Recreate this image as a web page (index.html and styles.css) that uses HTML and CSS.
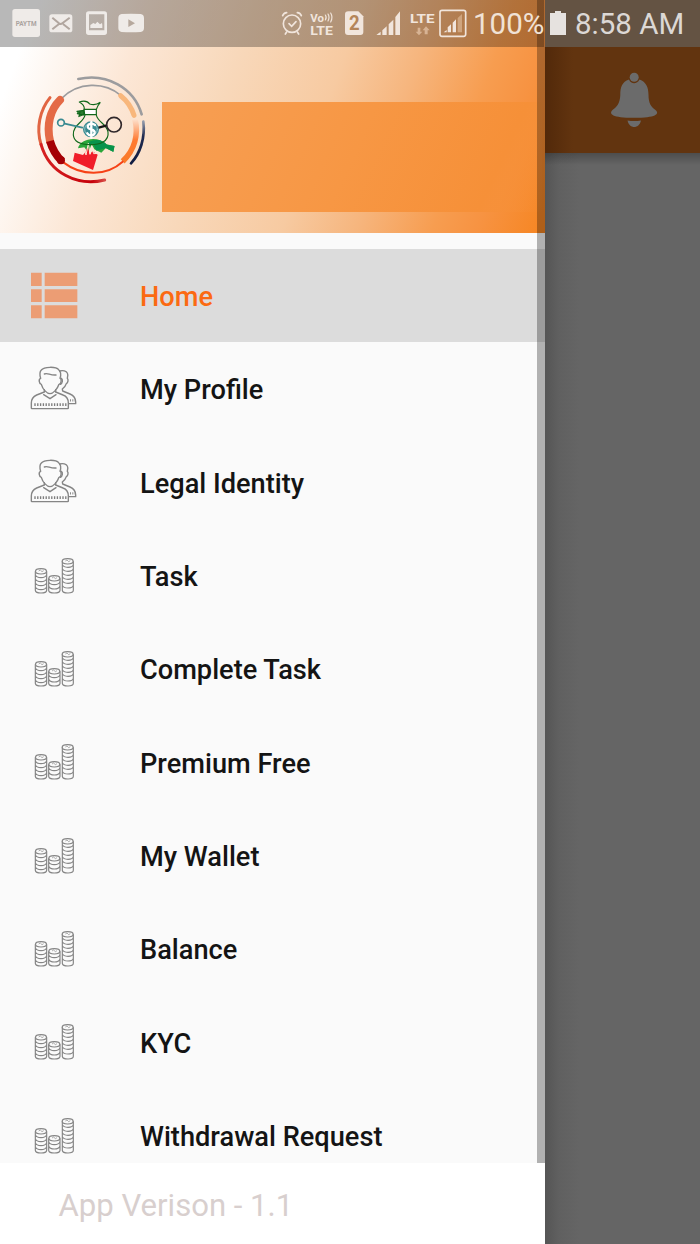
FILE: index.html
```html
<!DOCTYPE html>
<html lang="en">
<head>
<meta charset="utf-8">
<title>Home</title>
<link rel="stylesheet" href="styles.css">
</head>
<body>
<svg class="defs" width="0" height="0">
  <symbol id="list" viewBox="45 47 150 150">
    <path fill="#ec9d74" d="M48 52h32v40h-32zM89 52h98v40h-98zM48 102h32v38h-32zM89 102h98v38h-98zM48 150h32v39h-32zM89 150h98v39h-98z"/>
  </symbol>
  <symbol id="people" viewBox="45 327 150 150">
    <g fill="none" stroke="#858585" stroke-width="4.2" stroke-linejoin="round" stroke-linecap="round">
      <path d="M77 370c-3-10-3-20 2-25 8-10 44-11 52-1 7 6 8 14 4 26 5 1 5 16-3 18-5 15-18 28-27 28s-22-13-26-28c-7-2-9-16-2-18z"/>
      <path d="M88 357c10-5 17 5 35 3"/>
      <path d="M134 348c10-3 20 0 23 6 3 5 2 10 0 16 4 3 2 14-3 16-2 7-7 12-12 16l1 6 22 9c11 5 17 12 17 24v5h-20"/>
      <path d="M139 370c5 4 4 14-3 18"/>
      <path d="M88 404v7l-23 9c-11 5-16 13-16 24v15q0 2 2 2h107q2 0 2-2v-15c0-12-5-20-16-24l-22-9v-7"/>
      <path d="M86 419l19 12 18-12"/>
    </g>
    <path d="M58 449H155" stroke="#7d7d7d" stroke-width="8" stroke-dasharray="4 4.4"/>
    <path d="M165 436H180" stroke="#8a8a8a" stroke-width="7" stroke-dasharray="3 4"/>
  </symbol>
  <symbol id="coins" viewBox="30 32 150 150">
    <g fill="none" stroke="#858585" stroke-width="3.5">
      <ellipse cx="63" cy="93" rx="16.5" ry="8"/>
      <path d="M46 93v57q1 8 17 8t17-8v-57M46 103q3 9 17 9t17-9M46 115q3 9 17 9t17-9M46 127q3 9 17 9t17-9M46 139q3 9 17 9t17-9"/>
      <ellipse cx="103" cy="114" rx="16.500" ry="8"/>
      <path d="M86 114v36q1 8 17 8t17-8v-36M86 124q3 9 17 9t17-9M86 137q3 9 17 9t17-9"/>
      <ellipse cx="143" cy="63" rx="16.500" ry="8"/>
      <path d="M127 63v87q1 8 17 8t16-8v-87M127 73q3 8 17 8t16-8M127 85q3 8 17 8t16-8M127 97q3 8 17 8t16-8M127 109q3 8 17 8t16-8M127 121q3 8 17 8t16-8M127 135q3 8 17 8t16-8"/>
      <path stroke-width="2" d="M56 92l5-3 5 5 5-3M96 113l5-3 5 5 5-3M136 62l5-3 5 5 5-3"/>
    </g>
  </symbol>
</svg>

<div class="screen">
  <aside class="drawer">
    <header class="profile">
      <svg class="logo" viewBox="0 0 420 390" fill="none" stroke-linecap="round">
        <defs>
          <linearGradient id="fade" x1="0" y1="0" x2="0" y2="1"><stop offset="0" stop-color="#fde2cf"/><stop offset=".5" stop-color="#ff7a32"/><stop offset="1" stop-color="#f97a28"/></linearGradient>
          <linearGradient id="navy" x1="0" y1="0" x2="0" y2="1"><stop offset="0" stop-color="#929aaa"/><stop offset=".35" stop-color="#202b50"/><stop offset="1" stop-color="#101c42"/></linearGradient>
          <linearGradient id="crimson" x1="0" y1="0" x2="1" y2="0"><stop offset="0" stop-color="#d62222"/><stop offset=".8" stop-color="#c50009"/><stop offset="1" stop-color="#d74b45"/></linearGradient>
        </defs>
        <path stroke="#9c9c9e" stroke-width="8" d="M160 42C245 23 327 68 350 148"/>
        <path stroke="url(#navy)" stroke-width="8" d="M355 170C361 218 346 265 318 295"/>
        <path stroke="#e16543" stroke-width="9" d="M75 98C44 136 33 190 48 238"/>
        <path stroke="url(#crimson)" stroke-width="9" d="M48 238C73 325 158 365 239 345"/>
        <path stroke="#9c9c9e" stroke-width="5" d="M109 101C159 49 239 50 287 91"/>
        <path stroke="#f8b77c" stroke-width="15" d="M287 92Q316 115 327 151"/>
        <path stroke="url(#fade)" stroke-width="17" stroke-linecap="butt" d="M330 162C341 210 328 256 293 289"/>
        <path stroke="#f64217" stroke-width="6" d="M115 292C170 334 244 334 293 290"/>
        <path stroke="#e46a46" stroke-width="24" d="M105 105C75 135 64 180 75 228"/>
        <path stroke="#a50005" stroke-width="24" stroke-linecap="butt" d="M75 228Q85 264 111 289"/>
        <circle cx="108" cy="286" r="12" fill="#a50005"/>
        <path fill="#2ba63a" d="M159 250C165 220 220 211 244 238L268 243 265 260 242 250 229 263 208 253 200 238 190 263 178 247z"/>
        <path fill="#08934c" d="M190 231q35-15 56 8l23 4-4 18-22-12-29 8-10-22-9 9z"/>
        <path fill="#f01d29" d="M149 263L174 270 182 260 188 243 194 268 202 259 218 269 204 315 144 288z"/>
        <path stroke="#fde6d5" stroke-width="3" d="M151 258l19 8 8-14 5 18 7-35 5 33 6-18 5 16 15-1"/>
        <g stroke="#11681b" stroke-width="3.500">
          <path d="M163 111q22-7 31 6 17 6 32-5-8 9-12 21M163 111q16 9 15 22"/>
          <path fill="#fff" d="M177 133h37v16h-35z"/>
          <path fill="#2a7a31" d="M156 139l20-3v14l-19-4M173 150l-11 4 3-13"/>
          <path d="M180 150C177 172 143 179 145 210 147 235 171 239 197 239S253 230 249 201C246 177 218 172 214 150"/>
        </g>
        <g stroke="#398a91" stroke-width="5"><circle cx="108" cy="173" r="10"/><path d="M119 176L172 188"/></g>
        <path stroke="#171717" stroke-width="7" d="M213 190L243 182"/>
        <circle cx="267" cy="179" r="22" stroke="#30282b" stroke-width="5"/>
        <circle cx="198" cy="193" r="24" fill="#398a91"/>
        <circle cx="198" cy="193" r="19" stroke="#b9dcdb" stroke-width="2"/>
        <path stroke="#fff" stroke-width="7" d="M210 180C198 171 183 180 190 189 195 195 211 192 209 204 206 215 192 213 187 205M199 171V218"/>
      </svg>
      <div class="account"></div>
    </header>
    <nav class="menu">
      <a class="item active"><svg class="icon"><use href="#list"/></svg><span>Home</span></a>
      <a class="item"><svg class="icon"><use href="#people"/></svg><span>My Profile</span></a>
      <a class="item"><svg class="icon"><use href="#people"/></svg><span>Legal Identity</span></a>
      <a class="item"><svg class="icon"><use href="#coins"/></svg><span>Task</span></a>
      <a class="item"><svg class="icon"><use href="#coins"/></svg><span>Complete Task</span></a>
      <a class="item"><svg class="icon"><use href="#coins"/></svg><span>Premium Free</span></a>
      <a class="item"><svg class="icon"><use href="#coins"/></svg><span>My Wallet</span></a>
      <a class="item"><svg class="icon"><use href="#coins"/></svg><span>Balance</span></a>
      <a class="item"><svg class="icon"><use href="#coins"/></svg><span>KYC</span></a>
      <a class="item"><svg class="icon"><use href="#coins"/></svg><span>Withdrawal Request</span></a>
    </nav>
    <footer class="version">App Verison - 1.1</footer>
    <div class="scrollbar"></div>
  </aside>
  <main class="page">
    <div class="inset"></div>
    <div class="appbar">
      <svg class="bell" viewBox="0 0 90 110" fill="#6b6b6b">
        <circle cx="44.200" cy="17.300" r="4.500"/>
        <path d="M39 19.500C32 22 30.300 27 30.300 35 30 43 27 47 22.500 50 18.500 54 22 57.800 44 57.800S70 54 65.500 50C61 47 58.500 43 58.500 35 58.500 27 56 22 49.500 19.500 47 24.500 41 24.500 39 19.500zM37.500 60.500Q44 61.500 51 60.500C50 65 47 67 44.200 67S38.500 65 37.500 60.500z"/>
      </svg>
    </div>
    <div class="body"></div>
  </main>
</div>

<div class="status">
  <svg class="notices" viewBox="0 0 480 141" fill="#efebe8">
    <rect x="37" y="27" width="83" height="84" rx="8"/>
    <text class="paytm" x="47" y="77" textLength="63" lengthAdjust="spacingAndGlyphs">PAYTM</text>
    <rect x="148" y="43" width="69" height="54" rx="8"/>
    <path d="M157 53l20 17q5 4 10 0l22-17M157 88l20-16M209 88l-20-16" fill="none" stroke="#b1a69f" stroke-width="6"/>
    <path fill-rule="evenodd" d="M266 34h47q8 0 8 8v55q0 8-8 8h-47q-8 0-8-8V42q0-8 8-8zM267 43v48h46V43z"/>
    <path d="M271 84V75l9-6 6 3 6-7 8 8 6-4 1 6v9z"/>
    <path fill-rule="evenodd" d="M365 42q28-2 57 0 10 1 10 13v29q0 11-10 12-29 2-57 0-10-1-10-12V55q0-12 10-13zM385 58v23l20-11z"/>
  </svg>
  <svg class="radio" viewBox="0 0 600 141" fill="#f1e5dc">
    <g fill="none" stroke="#f1e5dc" stroke-width="5" stroke-linecap="round">
      <circle cx="66" cy="71" r="26"/><path d="M57 71l8 8 13-14M38 47q3-8 12-9M94 47q-3-8-12-9M50 96l-4 6M82 96l4 6"/>
      <path d="M166 45q5 7 0 15M174 42q6 10 0 21M182 39q8 13 0 27" stroke-width="3.500"/>
    </g>
    <text><tspan class="vo" x="121" y="66" textLength="41" lengthAdjust="spacingAndGlyphs">Vo</tspan><tspan class="lte" x="121" y="105" textLength="68" lengthAdjust="spacingAndGlyphs">LTE</tspan></text>
    <path d="M235 34h30l15 15v47q0 9-9 9h-37q-9 0-9-9V43q0-9 10-9z"/>
    <text class="sim" x="237" y="91" textLength="32" lengthAdjust="spacingAndGlyphs">2</text>
    <path d="M319 105l13-10v10zM337 91l13-12v26h-13zM356 73l14-14v46h-14zM376 51l14-17v71h-14z"/>
    <text class="lte" x="420" y="70" textLength="74" lengthAdjust="spacingAndGlyphs">LTE</text>
    <path fill="#d7b394" d="M443 83h8v12h6l-10 11-10-11h6zM464 103V91h-6l10-12 11 12h-6v12z"/>
    <rect x="510" y="31" width="77" height="78" rx="6" fill="none" stroke="#f1e5dc" stroke-width="5"/>
    <path d="M521 97l9-7v7zM533 82l10-9v24h-10zM548 68l10-10v39h-10z"/><path fill="#cfa57f" d="M563 54l13-12v55h-13z"/>
  </svg>
  <span class="percent">100%</span>
  <svg class="battery" viewBox="0 0 16 24" fill="#e6e2df"><path d="M5 0h6v2h5v22H0V2h5z"/></svg>
  <span class="clock">8:58 AM</span>
</div>
</body>
</html>
```

FILE: styles.css
```css
* { box-sizing: border-box; }

body {
  margin: 0;
  position: relative;
  width: 700px;
  height: 1244px;
  overflow: hidden;
  font-family: Roboto, "Liberation Sans", sans-serif;
  background: #656565;
}

svg { display: block; flex: none; }
.defs { position: absolute; }

.screen { display: flex; height: 1244px; }

.drawer {
  position: relative;
  display: flex;
  flex-direction: column;
  width: 544.5px;
  flex: none;
  background: #fafafa;
}

.profile {
  display: flex;
  flex: none;
  height: 233px;
  padding: 65px 0 0 25px;
  background: linear-gradient(110deg, #fff 6%, #fce7d6 24%, #f8d8ba 41%, #f7caa1 58%, #f6b57d 70%, #f79d50 82%, #f79342 89%, #f68521 100%);
}

.logo { width: 140px; height: 130px; }

.account {
  width: 380px;
  height: 110px;
  margin: 37px 0 0 -3.5px;
  background: linear-gradient(115deg, #f79f54, #f79744 50%, #f69038 85%, rgba(246, 138, 43, 0));
}

.menu {
  height: 930px;
  flex: none;
  padding-top: 16px;
  overflow: hidden;
}

.item {
  display: flex;
  align-items: center;
  height: 93.33px;
  padding-left: 30px;
  gap: 60px;
  font-size: 27.2px;
  font-weight: 500;
  color: #141414;
}

.item.active { background: #dcdcdc; color: #fb6a12; }
.icon { width: 50px; height: 50px; }
.item span { padding-top: 3px; white-space: nowrap; }

.version {
  flex: 1;
  padding: 25px 0 0 58.5px;
  font-size: 31.1px;
  line-height: 36px;
  color: #d8cfce;
  background: #fff;
}

.scrollbar {
  position: absolute;
  top: 0;
  right: 0;
  width: 8px;
  height: 1163px;
  background: rgba(0, 0, 0, 0.29);
}

.page {
  flex: 1;
  display: flex;
  flex-direction: column;
  background: linear-gradient(90deg, #555, #606060 14px, #656565 34px);
}

.inset { height: 47px; background: #645343; }
.appbar { height: 106px; padding: 13px 0 0 45.5px; background: linear-gradient(90deg, #52290a, #62340f 28px); }
.bell { width: 90px; height: 110px; }
.body { height: 12px; background: linear-gradient(rgba(0, 0, 0, 0.24), rgba(0, 0, 0, 0)); }

.status {
  position: absolute;
  inset: 0 0 auto 0;
  display: flex;
  align-items: flex-start;
  height: 47px;
  font-size: 29.5px;
  line-height: 48px;
  white-space: nowrap;
  background: linear-gradient(90deg, rgba(0, 0, 0, 0.28) 544.5px, transparent 544.5px);
}

.notices { width: 160px; height: 47px; }
.radio { width: 200px; height: 47px; margin-left: 110px; }
.paytm { font: 700 21px Roboto, sans-serif; fill: #aaa39f; }
.vo { font: 700 34px Roboto, sans-serif; }
.lte { font: 700 41px Roboto, sans-serif; }
.sim { font: 700 59px Roboto, sans-serif; fill: #b48559; }
.percent { width: 77px; padding-left: 3px; color: #f0e2d6; }
.battery { width: 16px; height: 24px; margin: 11px 0 0 3px; }
.clock { margin-left: 9px; color: #dcd8d5; }
```
